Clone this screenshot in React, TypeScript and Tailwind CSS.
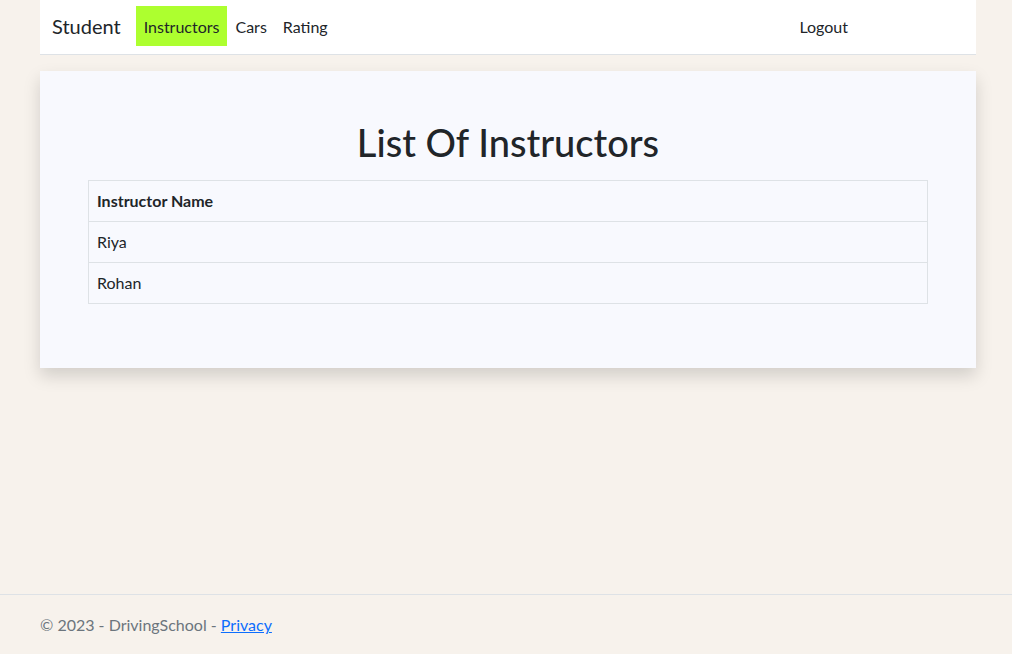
export default function App() {
  const instructors = ["Riya", "Rohan"];

  return (
    <div
      className="flex min-h-screen flex-col bg-[#f7f2ec] text-[#212529]"
      style={{ fontFamily: '"Segoe UI", Lato, "Noto Sans", "Liberation Sans", sans-serif' }}
    >
      <div className="ml-10 w-[936px]">
        <nav className="flex h-[55px] items-start border-b border-[#dee2e6] bg-white pl-3 pr-[120px] pt-[6px]">
          <a className="mr-[15px] text-[20px] leading-10 text-[#212529]">Student</a>
          <a className="bg-[#adff2f] px-2 pb-[7px] pt-[9px] text-base leading-6 text-[#212529]">Instructors</a>
          <a className="px-2 pb-[7px] pt-[9px] text-base leading-6 text-[#212529]">Cars</a>
          <a className="px-2 pb-[7px] pt-[9px] text-base leading-6 text-[#212529]">Rating</a>
          <div className="flex-1" />
          <a className="px-2 pb-[7px] pt-[9px] text-base leading-6 text-[#212529]">Logout</a>
        </nav>

        <main className="mt-4 bg-[#f8f9fe] px-12 pb-12 pt-[42px] shadow-[0_8px_16px_rgba(0,0,0,0.15)]">
          <h1 className="mb-2 text-center text-[38px] font-medium leading-[59px]">List Of Instructors</h1>
          <table className="mb-4 w-full border-collapse text-base">
            <thead>
              <tr>
                <th className="border border-[#dee2e6] px-2 py-2 text-left font-bold leading-6">Instructor Name</th>
              </tr>
            </thead>
            <tbody>
              {instructors.map((name) => (
                <tr key={name}>
                  <td className="border border-[#dee2e6] px-2 py-2 leading-6">{name}</td>
                </tr>
              ))}
            </tbody>
          </table>
        </main>
      </div>

      <div className="flex-1" />

      <footer className="h-[60px] border-t border-[#dee2e6] px-10 text-base leading-[60px] text-[#6c757d]">
        © 2023 - DrivingSchool - <a className="text-[#0d6efd] underline">Privacy</a>
      </footer>
    </div>
  );
}
